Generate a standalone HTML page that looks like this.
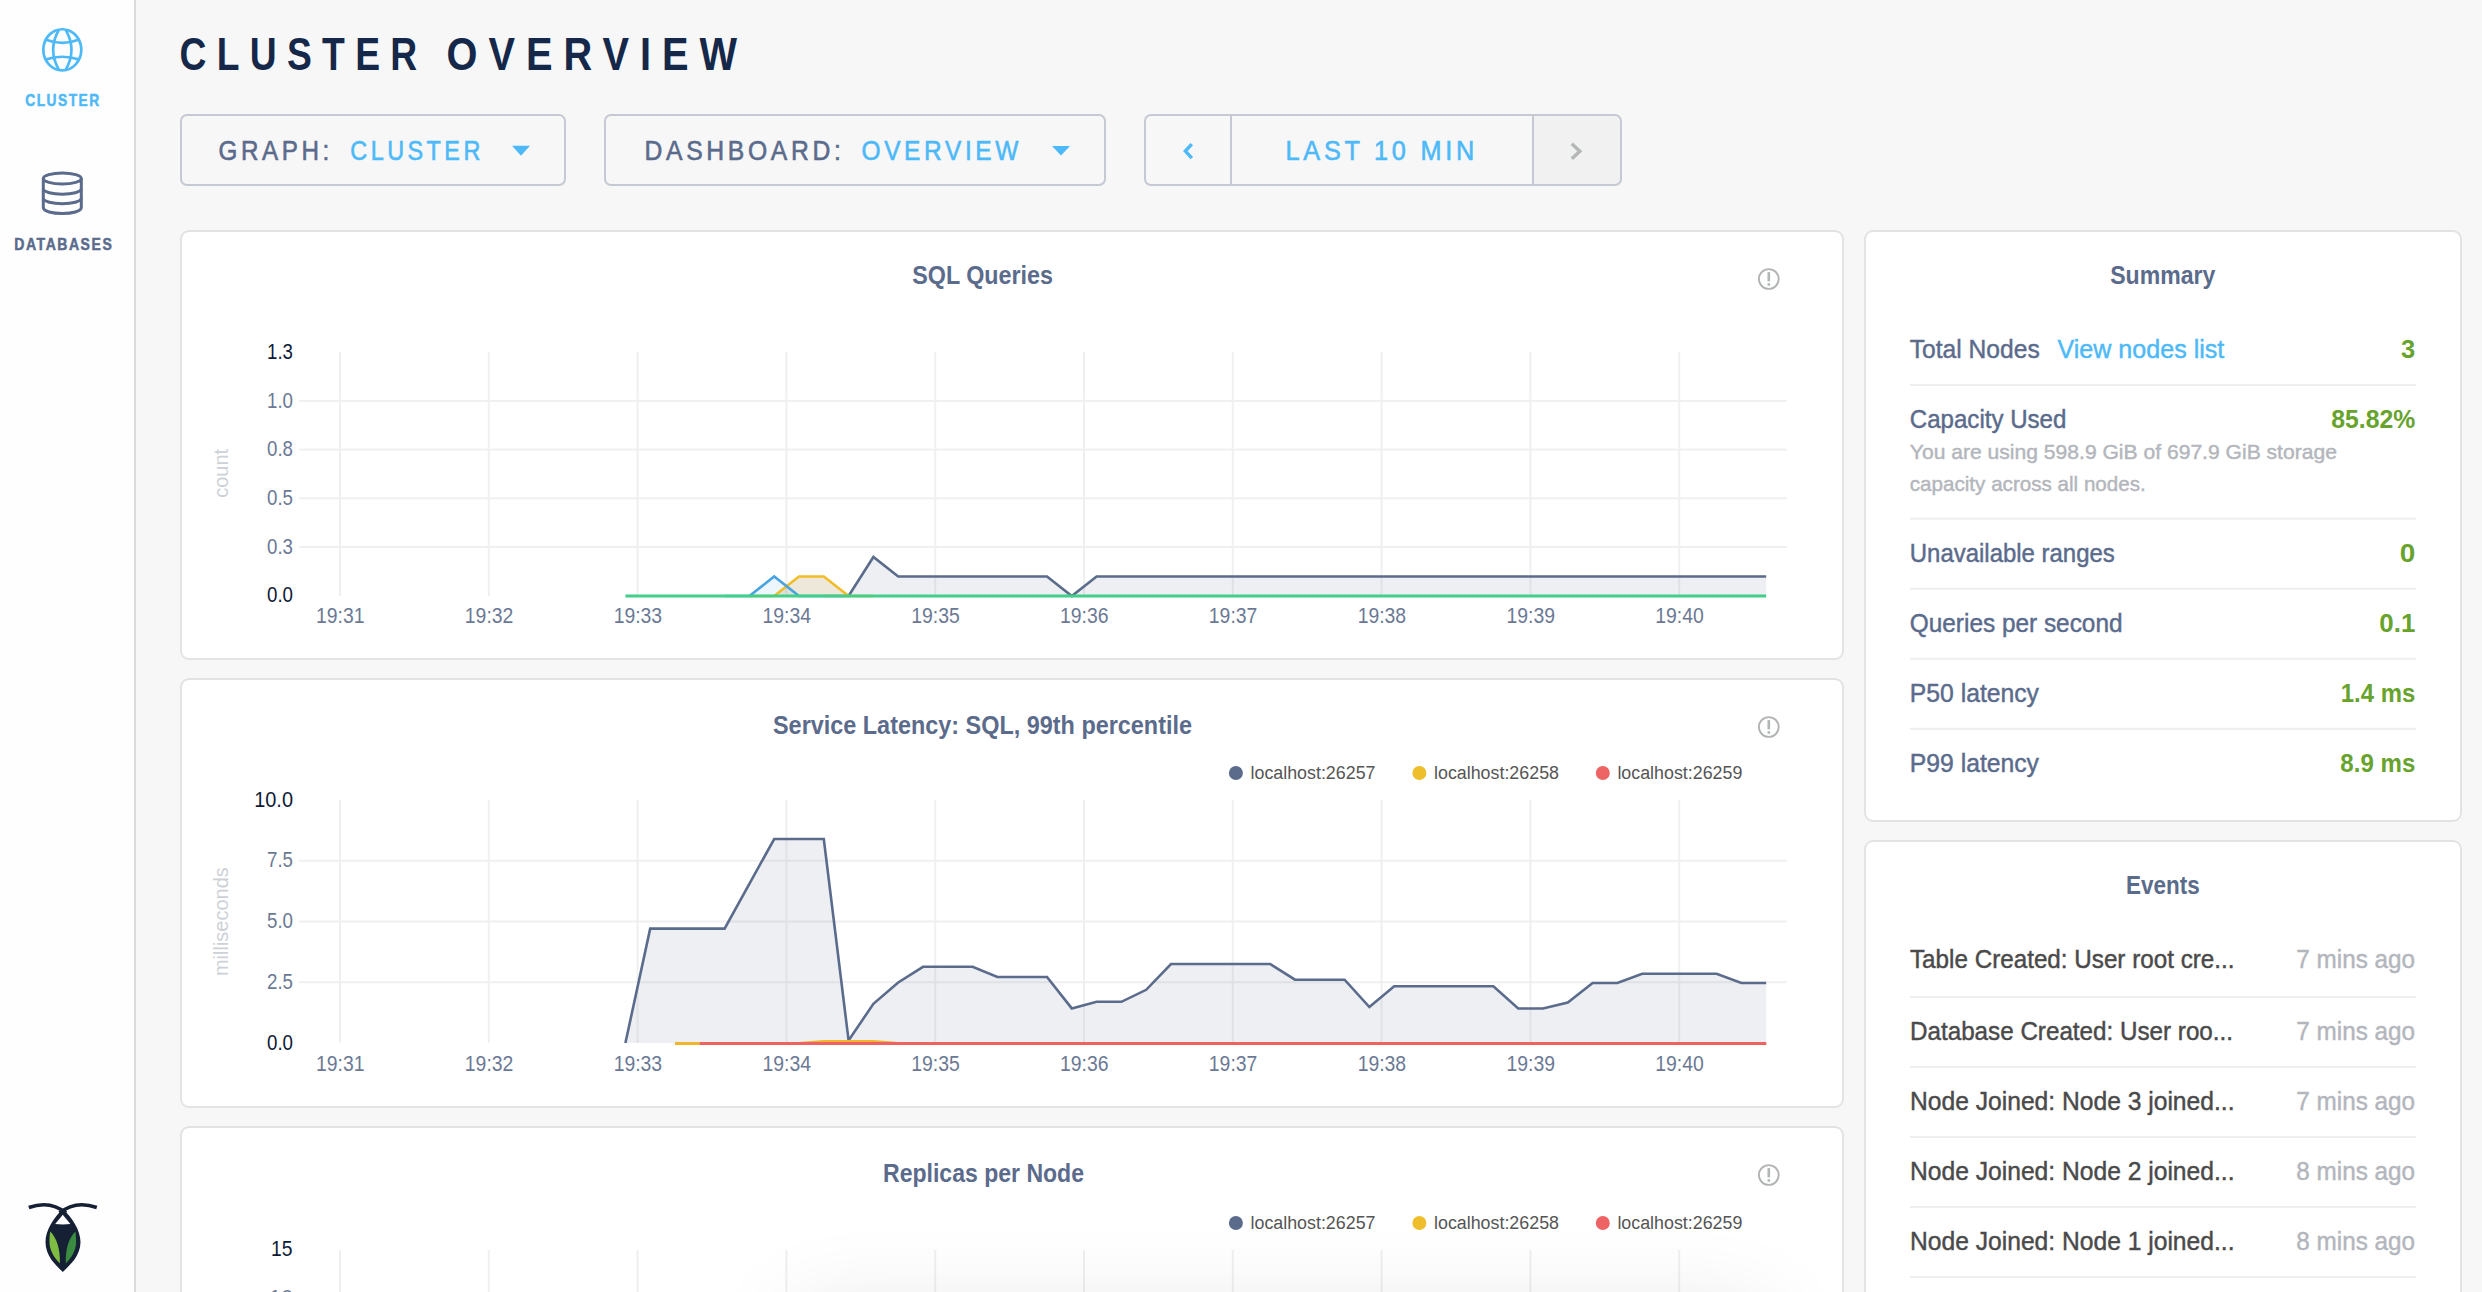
<!DOCTYPE html>
<html><head><meta charset="utf-8"><title>Cluster Overview</title>
<style>
html,body{margin:0;padding:0;background:#f7f7f7;overflow:hidden;}
body{width:2482px;height:1292px;font-family:"Liberation Sans", sans-serif;}
.root{position:relative;width:2482px;height:1292px;overflow:hidden;}
svg{position:absolute;left:0;top:0;display:block;}
svg text{font-family:"Liberation Sans", sans-serif;}
.shadow{position:absolute;left:800px;top:1320px;width:960px;height:200px;border-radius:8px;box-shadow:0 0 90px 10px rgba(0,0,0,0.10);background:transparent;}
</style></head><body>
<div class="root">
<svg width="2482" height="1292" viewBox="0 0 2482 1292">
<rect x="0" y="0" width="134" height="1292" fill="#fefefe"/>
<rect x="134" y="0" width="2" height="1292" fill="#dadada"/>
<g fill="none" stroke="#4eb9f8" stroke-width="2.7"><ellipse cx="62.3" cy="49.85" rx="19" ry="20.6"/><path d="M58.8 30 Q47.5 49.8 58.8 69.6"/><path d="M65.8 30 Q77.1 49.8 65.8 69.6"/><path d="M45.3 39.4 Q62.3 46.2 79.3 39.4"/><path d="M45.3 59.6 Q62.3 53.9 79.3 59.6"/></g>
<text x="63" y="106.3" font-size="16.5" fill="#4eb9f8" stroke="#4eb9f8" stroke-width="0.5" font-weight="bold" text-anchor="middle" textLength="75.5" lengthAdjust="spacingAndGlyphs" letter-spacing="1.8" >CLUSTER</text>
<g fill="none" stroke="#5b6b8c" stroke-width="3"><ellipse cx="62.3" cy="178.5" rx="19" ry="5.5"/><path d="M43.3 178.5 V207.5 C43.3 215.5 81.3 215.5 81.3 207.5 V178.5"/><path d="M43.3 188.5 C43.3 196 81.3 196 81.3 188.5"/><path d="M43.3 198 C43.3 205.5 81.3 205.5 81.3 198"/></g>
<text x="63.8" y="250.3" font-size="16.5" fill="#5b6b8c" stroke="#5b6b8c" stroke-width="0.5" font-weight="bold" text-anchor="middle" textLength="99" lengthAdjust="spacingAndGlyphs" letter-spacing="1.8" >DATABASES</text>
<g><path d="M28.8 1207.5 C42 1202.8 54 1203 66 1213" fill="none" stroke="#152035" stroke-width="3.6"/><path d="M96.8 1207.5 C83.6 1202.8 71.6 1203 59.6 1213" fill="none" stroke="#152035" stroke-width="3.6"/><path d="M62.8 1209 C72 1217.5 80.5 1230 80.5 1242 C80.5 1256 70 1265 62.8 1272 C55.5 1265 45.5 1256 45.5 1242 C45.5 1230 54 1217.5 62.8 1209 Z" fill="#152035"/><path d="M62.8 1214.8 L55.2 1224 C60 1224.6 66 1224.6 70.4 1224 Z" fill="#fefefe"/><path d="M50.2 1231.5 C56 1237 60.5 1248 59.8 1263.5 C53.5 1257 49.5 1250 49.5 1242 C49.5 1238 49.7 1234.5 50.2 1231.5 Z" fill="#7fbc42"/><path d="M75.4 1231.5 C69.6 1237 65.1 1248 65.8 1263.5 C72.1 1257 76.1 1250 76.1 1242 C76.1 1238 75.9 1234.5 75.4 1231.5 Z" fill="#3a8a3f"/></g>
<text x="179.5" y="70" font-size="47" fill="#152849" font-weight="bold" textLength="248" lengthAdjust="spacingAndGlyphs" letter-spacing="13" >CLUSTER</text>
<text x="446.5" y="70" font-size="47" fill="#152849" font-weight="bold" textLength="301.5" lengthAdjust="spacingAndGlyphs" letter-spacing="13" >OVERVIEW</text>
<rect x="181" y="115" width="384" height="70" rx="6" ry="6" fill="#f7f7f7" stroke="#c5c9d3" stroke-width="2"/>
<text x="218.5" y="160" font-size="27" fill="#5b6b8c" stroke="#5b6b8c" stroke-width="0.6" textLength="114.3" lengthAdjust="spacingAndGlyphs" letter-spacing="4" >GRAPH:</text>
<text x="350.3" y="160" font-size="27" fill="#4eb9f8" stroke="#4eb9f8" stroke-width="0.6" textLength="133.5" lengthAdjust="spacingAndGlyphs" letter-spacing="4" >CLUSTER</text>
<path d="M512 145.8 L530 145.8 L521 155.8 Z" fill="#4eb9f8"/>
<rect x="605" y="115" width="500" height="70" rx="6" ry="6" fill="#f7f7f7" stroke="#c5c9d3" stroke-width="2"/>
<text x="644.5" y="160" font-size="27" fill="#5b6b8c" stroke="#5b6b8c" stroke-width="0.6" textLength="200" lengthAdjust="spacingAndGlyphs" letter-spacing="4" >DASHBOARD:</text>
<text x="861.5" y="160" font-size="27" fill="#4eb9f8" stroke="#4eb9f8" stroke-width="0.6" textLength="160.5" lengthAdjust="spacingAndGlyphs" letter-spacing="4" >OVERVIEW</text>
<path d="M1052 146 L1070 146 L1061 155.6 Z" fill="#4eb9f8"/>
<path d="M1533 115 H1616 Q1621 115 1621 121 V179 Q1621 185 1616 185 H1533 Z" fill="#f1f1f2"/>
<rect x="1145" y="115" width="476" height="70" rx="6" ry="6" fill="none" stroke="#c5c9d3" stroke-width="2"/>
<rect x="1230" y="115" width="2" height="70" fill="#c5c9d3"/>
<rect x="1532" y="115" width="2" height="70" fill="#c5c9d3"/>
<path d="M1191.8 144.1 L1185.4 151.1 L1191.8 158.1" fill="none" stroke="#4eb9f8" stroke-width="3.5"/>
<path d="M1571.8 143.8 L1579.8 151.3 L1571.8 158.8" fill="none" stroke="#b3b7b7" stroke-width="3.5"/>
<text x="1285.5" y="160.4" font-size="27" fill="#4eb9f8" stroke="#4eb9f8" stroke-width="0.6" textLength="192.5" lengthAdjust="spacingAndGlyphs" letter-spacing="4" >LAST 10 MIN</text>
<rect x="181" y="231" width="1662" height="428" rx="8" ry="8" fill="#ffffff" stroke="#e3e3e3" stroke-width="2"/>
<rect x="181" y="679" width="1662" height="428" rx="8" ry="8" fill="#ffffff" stroke="#e3e3e3" stroke-width="2"/>
<rect x="181" y="1127" width="1662" height="272" rx="8" ry="8" fill="#ffffff" stroke="#e3e3e3" stroke-width="2"/>
<rect x="1865" y="231" width="596" height="590" rx="8" ry="8" fill="#ffffff" stroke="#e3e3e3" stroke-width="2"/>
<rect x="1865" y="841" width="596" height="558" rx="8" ry="8" fill="#ffffff" stroke="#e3e3e3" stroke-width="2"/>
<circle cx="1768.8" cy="279" r="9.9" fill="none" stroke="#b2b5b5" stroke-width="1.9"/>
<rect x="1767.5" y="272.1" width="2.6" height="9.3" fill="#b2b5b5"/>
<rect x="1767.5" y="283.2" width="2.6" height="2.5" fill="#b2b5b5"/>
<circle cx="1768.8" cy="727" r="9.9" fill="none" stroke="#b2b5b5" stroke-width="1.9"/>
<rect x="1767.5" y="720.1" width="2.6" height="9.3" fill="#b2b5b5"/>
<rect x="1767.5" y="731.2" width="2.6" height="2.5" fill="#b2b5b5"/>
<circle cx="1768.8" cy="1175" r="9.9" fill="none" stroke="#b2b5b5" stroke-width="1.9"/>
<rect x="1767.5" y="1168.1" width="2.6" height="9.3" fill="#b2b5b5"/>
<rect x="1767.5" y="1179.2" width="2.6" height="2.5" fill="#b2b5b5"/>
<text x="912.3" y="283.8" font-size="26" fill="#5b6b8c" font-weight="bold" textLength="140.7" lengthAdjust="spacingAndGlyphs" >SQL Queries</text>
<text x="773" y="733.8" font-size="26" fill="#5b6b8c" font-weight="bold" textLength="419" lengthAdjust="spacingAndGlyphs" >Service Latency: SQL, 99th percentile</text>
<text x="883" y="1181.8" font-size="26" fill="#5b6b8c" font-weight="bold" textLength="201" lengthAdjust="spacingAndGlyphs" >Replicas per Node</text>
<rect x="339.0" y="352" width="2" height="244" fill="#f0f0f0"/>
<rect x="487.8" y="352" width="2" height="244" fill="#f0f0f0"/>
<rect x="636.6" y="352" width="2" height="244" fill="#f0f0f0"/>
<rect x="785.4" y="352" width="2" height="244" fill="#f0f0f0"/>
<rect x="934.2" y="352" width="2" height="244" fill="#f0f0f0"/>
<rect x="1083.0" y="352" width="2" height="244" fill="#f0f0f0"/>
<rect x="1231.8" y="352" width="2" height="244" fill="#f0f0f0"/>
<rect x="1380.6" y="352" width="2" height="244" fill="#f0f0f0"/>
<rect x="1529.4" y="352" width="2" height="244" fill="#f0f0f0"/>
<rect x="1678.2" y="352" width="2" height="244" fill="#f0f0f0"/>
<rect x="299" y="399.9" width="1488" height="2" fill="#f0f0f0"/>
<rect x="299" y="448.6" width="1488" height="2" fill="#f0f0f0"/>
<rect x="299" y="497.3" width="1488" height="2" fill="#f0f0f0"/>
<rect x="299" y="546.0" width="1488" height="2" fill="#f0f0f0"/>
<text x="293" y="358.8" font-size="21.3" fill="#0d1a36" text-anchor="end" textLength="26.0" lengthAdjust="spacingAndGlyphs" >1.3</text>
<text x="293" y="407.5" font-size="21.3" fill="#6b7995" text-anchor="end" textLength="26.0" lengthAdjust="spacingAndGlyphs" >1.0</text>
<text x="293" y="456.20000000000005" font-size="21.3" fill="#6b7995" text-anchor="end" textLength="26.0" lengthAdjust="spacingAndGlyphs" >0.8</text>
<text x="293" y="504.90000000000003" font-size="21.3" fill="#6b7995" text-anchor="end" textLength="26.0" lengthAdjust="spacingAndGlyphs" >0.5</text>
<text x="293" y="553.6" font-size="21.3" fill="#6b7995" text-anchor="end" textLength="26.0" lengthAdjust="spacingAndGlyphs" >0.3</text>
<text x="293" y="602.3000000000001" font-size="21.3" fill="#0d1a36" text-anchor="end" textLength="26.0" lengthAdjust="spacingAndGlyphs" >0.0</text>
<text x="340.3" y="622.9" font-size="21.2" fill="#6b7995" text-anchor="middle" textLength="48.5" lengthAdjust="spacingAndGlyphs" >19:31</text>
<text x="489.1" y="622.9" font-size="21.2" fill="#6b7995" text-anchor="middle" textLength="48.5" lengthAdjust="spacingAndGlyphs" >19:32</text>
<text x="637.9" y="622.9" font-size="21.2" fill="#6b7995" text-anchor="middle" textLength="48.5" lengthAdjust="spacingAndGlyphs" >19:33</text>
<text x="786.6999999999999" y="622.9" font-size="21.2" fill="#6b7995" text-anchor="middle" textLength="48.5" lengthAdjust="spacingAndGlyphs" >19:34</text>
<text x="935.5" y="622.9" font-size="21.2" fill="#6b7995" text-anchor="middle" textLength="48.5" lengthAdjust="spacingAndGlyphs" >19:35</text>
<text x="1084.3" y="622.9" font-size="21.2" fill="#6b7995" text-anchor="middle" textLength="48.5" lengthAdjust="spacingAndGlyphs" >19:36</text>
<text x="1233.1" y="622.9" font-size="21.2" fill="#6b7995" text-anchor="middle" textLength="48.5" lengthAdjust="spacingAndGlyphs" >19:37</text>
<text x="1381.8999999999999" y="622.9" font-size="21.2" fill="#6b7995" text-anchor="middle" textLength="48.5" lengthAdjust="spacingAndGlyphs" >19:38</text>
<text x="1530.7" y="622.9" font-size="21.2" fill="#6b7995" text-anchor="middle" textLength="48.5" lengthAdjust="spacingAndGlyphs" >19:39</text>
<text x="1679.5" y="622.9" font-size="21.2" fill="#6b7995" text-anchor="middle" textLength="48.5" lengthAdjust="spacingAndGlyphs" >19:40</text>
<text x="227.6" y="473.3" font-size="20" fill="#cdd1d8" text-anchor="middle" transform="rotate(-90 227.6 473.3)">count</text>
<path d="M625.4 596.0 L650.2 596.0 L675.0 596.0 L699.8 596.0 L724.6 596.0 L749.4 596.0 L774.2 596.0 L799.0 596.0 L823.8 596.0 L848.6 596.0 L873.4 557.0 L898.2 576.5 L923.0 576.5 L947.8 576.5 L972.6 576.5 L997.4 576.5 L1022.2 576.5 L1047.0 576.5 L1071.8 596.0 L1096.6 576.5 L1121.4 576.5 L1146.2 576.5 L1171.0 576.5 L1195.8 576.5 L1220.6 576.5 L1245.4 576.5 L1270.2 576.5 L1295.0 576.5 L1319.8 576.5 L1344.6 576.5 L1369.4 576.5 L1394.2 576.5 L1419.0 576.5 L1443.8 576.5 L1468.6 576.5 L1493.4 576.5 L1518.2 576.5 L1543.0 576.5 L1567.8 576.5 L1592.6 576.5 L1617.4 576.5 L1642.2 576.5 L1667.0 576.5 L1691.8 576.5 L1716.6 576.5 L1741.4 576.5 L1766.2 576.5 L1766.2 596 L625.4 596 Z" fill="rgba(90,106,140,0.11)"/>
<path d="M625.4 596.0 L650.2 596.0 L675.0 596.0 L699.8 596.0 L724.6 596.0 L749.4 596.0 L774.2 596.0 L799.0 576.5 L823.8 576.5 L848.6 596.0 L873.4 596.0 L898.2 596.0 L923.0 596.0 L947.8 596.0 L972.6 596.0 L997.4 596.0 L1022.2 596.0 L1047.0 596.0 L1071.8 596.0 L1096.6 596.0 L1121.4 596.0 L1146.2 596.0 L1171.0 596.0 L1195.8 596.0 L1220.6 596.0 L1245.4 596.0 L1270.2 596.0 L1295.0 596.0 L1319.8 596.0 L1344.6 596.0 L1369.4 596.0 L1394.2 596.0 L1419.0 596.0 L1443.8 596.0 L1468.6 596.0 L1493.4 596.0 L1518.2 596.0 L1543.0 596.0 L1567.8 596.0 L1592.6 596.0 L1617.4 596.0 L1642.2 596.0 L1667.0 596.0 L1691.8 596.0 L1716.6 596.0 L1741.4 596.0 L1766.2 596.0 L1766.2 596 L625.4 596 Z" fill="rgba(90,106,140,0.1)"/>
<path d="M625.4 596.0 L650.2 596.0 L675.0 596.0 L699.8 596.0 L724.6 596.0 L749.4 596.0 L774.2 596.0 L799.0 576.5 L823.8 576.5 L848.6 596.0 L873.4 596.0 L898.2 596.0 L923.0 596.0 L947.8 596.0 L972.6 596.0 L997.4 596.0 L1022.2 596.0 L1047.0 596.0 L1071.8 596.0 L1096.6 596.0 L1121.4 596.0 L1146.2 596.0 L1171.0 596.0 L1195.8 596.0 L1220.6 596.0 L1245.4 596.0 L1270.2 596.0 L1295.0 596.0 L1319.8 596.0 L1344.6 596.0 L1369.4 596.0 L1394.2 596.0 L1419.0 596.0 L1443.8 596.0 L1468.6 596.0 L1493.4 596.0 L1518.2 596.0 L1543.0 596.0 L1567.8 596.0 L1592.6 596.0 L1617.4 596.0 L1642.2 596.0 L1667.0 596.0 L1691.8 596.0 L1716.6 596.0 L1741.4 596.0 L1766.2 596.0 L1766.2 596 L625.4 596 Z" fill="rgba(239,181,44,0.12)"/>
<path d="M625.4 596.0 L650.2 596.0 L675.0 596.0 L699.8 596.0 L724.6 596.0 L749.4 596.0 L774.2 576.5 L799.0 596.0 L823.8 596.0 L848.6 596.0 L873.4 596.0 L898.2 596.0 L923.0 596.0 L947.8 596.0 L972.6 596.0 L997.4 596.0 L1022.2 596.0 L1047.0 596.0 L1071.8 596.0 L1096.6 596.0 L1121.4 596.0 L1146.2 596.0 L1171.0 596.0 L1195.8 596.0 L1220.6 596.0 L1245.4 596.0 L1270.2 596.0 L1295.0 596.0 L1319.8 596.0 L1344.6 596.0 L1369.4 596.0 L1394.2 596.0 L1419.0 596.0 L1443.8 596.0 L1468.6 596.0 L1493.4 596.0 L1518.2 596.0 L1543.0 596.0 L1567.8 596.0 L1592.6 596.0 L1617.4 596.0 L1642.2 596.0 L1667.0 596.0 L1691.8 596.0 L1716.6 596.0 L1741.4 596.0 L1766.2 596.0 L1766.2 596 L625.4 596 Z" fill="rgba(74,163,223,0.1)"/>
<path d="M823.8 596.0 L848.6 596.0 L873.4 557.0 L898.2 576.5 L923.0 576.5 L947.8 576.5 L972.6 576.5 L997.4 576.5 L1022.2 576.5 L1047.0 576.5 L1071.8 596.0 L1096.6 576.5 L1121.4 576.5 L1146.2 576.5 L1171.0 576.5 L1195.8 576.5 L1220.6 576.5 L1245.4 576.5 L1270.2 576.5 L1295.0 576.5 L1319.8 576.5 L1344.6 576.5 L1369.4 576.5 L1394.2 576.5 L1419.0 576.5 L1443.8 576.5 L1468.6 576.5 L1493.4 576.5 L1518.2 576.5 L1543.0 576.5 L1567.8 576.5 L1592.6 576.5 L1617.4 576.5 L1642.2 576.5 L1667.0 576.5 L1691.8 576.5 L1716.6 576.5 L1741.4 576.5 L1766.2 576.5" fill="none" stroke="#5b6b8c" stroke-width="2.6" stroke-linejoin="miter"/>
<path d="M749.4 596.0 L774.2 596.0 L799.0 576.5 L823.8 576.5 L848.6 596.0 L873.4 596.0" fill="none" stroke="#f1bc25" stroke-width="2.6" stroke-linejoin="miter"/>
<path d="M724.6 596.0 L749.4 596.0 L774.2 576.5 L799.0 596.0 L823.8 596.0" fill="none" stroke="#4aa3df" stroke-width="2.6" stroke-linejoin="miter"/>
<path d="M625.4 596.0 L650.2 596.0 L675.0 596.0 L699.8 596.0 L724.6 596.0 L749.4 596.0 L774.2 596.0 L799.0 596.0 L823.8 596.0 L848.6 596.0 L873.4 596.0 L898.2 596.0 L923.0 596.0 L947.8 596.0 L972.6 596.0 L997.4 596.0 L1022.2 596.0 L1047.0 596.0 L1071.8 596.0 L1096.6 596.0 L1121.4 596.0 L1146.2 596.0 L1171.0 596.0 L1195.8 596.0 L1220.6 596.0 L1245.4 596.0 L1270.2 596.0 L1295.0 596.0 L1319.8 596.0 L1344.6 596.0 L1369.4 596.0 L1394.2 596.0 L1419.0 596.0 L1443.8 596.0 L1468.6 596.0 L1493.4 596.0 L1518.2 596.0 L1543.0 596.0 L1567.8 596.0 L1592.6 596.0 L1617.4 596.0 L1642.2 596.0 L1667.0 596.0 L1691.8 596.0 L1716.6 596.0 L1741.4 596.0 L1766.2 596.0" fill="none" stroke="#40d08a" stroke-width="3.2" stroke-linejoin="miter"/>
<rect x="339.0" y="800" width="2" height="243" fill="#f0f0f0"/>
<rect x="487.8" y="800" width="2" height="243" fill="#f0f0f0"/>
<rect x="636.6" y="800" width="2" height="243" fill="#f0f0f0"/>
<rect x="785.4" y="800" width="2" height="243" fill="#f0f0f0"/>
<rect x="934.2" y="800" width="2" height="243" fill="#f0f0f0"/>
<rect x="1083.0" y="800" width="2" height="243" fill="#f0f0f0"/>
<rect x="1231.8" y="800" width="2" height="243" fill="#f0f0f0"/>
<rect x="1380.6" y="800" width="2" height="243" fill="#f0f0f0"/>
<rect x="1529.4" y="800" width="2" height="243" fill="#f0f0f0"/>
<rect x="1678.2" y="800" width="2" height="243" fill="#f0f0f0"/>
<rect x="299" y="859.8" width="1488" height="2" fill="#f0f0f0"/>
<rect x="299" y="920.5" width="1488" height="2" fill="#f0f0f0"/>
<rect x="299" y="981.2" width="1488" height="2" fill="#f0f0f0"/>
<text x="293" y="806.6" font-size="21.3" fill="#0d1a36" text-anchor="end" textLength="38.8" lengthAdjust="spacingAndGlyphs" >10.0</text>
<text x="293" y="867.35" font-size="21.3" fill="#6b7995" text-anchor="end" textLength="26.0" lengthAdjust="spacingAndGlyphs" >7.5</text>
<text x="293" y="928.1" font-size="21.3" fill="#6b7995" text-anchor="end" textLength="26.0" lengthAdjust="spacingAndGlyphs" >5.0</text>
<text x="293" y="988.85" font-size="21.3" fill="#6b7995" text-anchor="end" textLength="26.0" lengthAdjust="spacingAndGlyphs" >2.5</text>
<text x="293" y="1049.6" font-size="21.3" fill="#0d1a36" text-anchor="end" textLength="26.0" lengthAdjust="spacingAndGlyphs" >0.0</text>
<text x="340.3" y="1070.9" font-size="21.2" fill="#6b7995" text-anchor="middle" textLength="48.5" lengthAdjust="spacingAndGlyphs" >19:31</text>
<text x="489.1" y="1070.9" font-size="21.2" fill="#6b7995" text-anchor="middle" textLength="48.5" lengthAdjust="spacingAndGlyphs" >19:32</text>
<text x="637.9" y="1070.9" font-size="21.2" fill="#6b7995" text-anchor="middle" textLength="48.5" lengthAdjust="spacingAndGlyphs" >19:33</text>
<text x="786.6999999999999" y="1070.9" font-size="21.2" fill="#6b7995" text-anchor="middle" textLength="48.5" lengthAdjust="spacingAndGlyphs" >19:34</text>
<text x="935.5" y="1070.9" font-size="21.2" fill="#6b7995" text-anchor="middle" textLength="48.5" lengthAdjust="spacingAndGlyphs" >19:35</text>
<text x="1084.3" y="1070.9" font-size="21.2" fill="#6b7995" text-anchor="middle" textLength="48.5" lengthAdjust="spacingAndGlyphs" >19:36</text>
<text x="1233.1" y="1070.9" font-size="21.2" fill="#6b7995" text-anchor="middle" textLength="48.5" lengthAdjust="spacingAndGlyphs" >19:37</text>
<text x="1381.8999999999999" y="1070.9" font-size="21.2" fill="#6b7995" text-anchor="middle" textLength="48.5" lengthAdjust="spacingAndGlyphs" >19:38</text>
<text x="1530.7" y="1070.9" font-size="21.2" fill="#6b7995" text-anchor="middle" textLength="48.5" lengthAdjust="spacingAndGlyphs" >19:39</text>
<text x="1679.5" y="1070.9" font-size="21.2" fill="#6b7995" text-anchor="middle" textLength="48.5" lengthAdjust="spacingAndGlyphs" >19:40</text>
<text x="227.6" y="921.6" font-size="20" fill="#cdd1d8" text-anchor="middle" transform="rotate(-90 227.6 921.6)">milliseconds</text>
<path d="M625.4 1043.0 L650.2 928.6 L675.0 928.6 L699.8 928.6 L724.6 928.6 L774.2 839.0 L799.0 839.0 L823.8 839.0 L848.6 1040.5 L873.4 1003.8 L898.2 982.5 L923.0 966.8 L947.8 966.8 L972.6 966.8 L997.4 977.0 L1022.2 977.0 L1047.0 977.0 L1071.8 1008.4 L1096.6 1001.8 L1121.4 1001.8 L1146.2 989.8 L1171.0 964.0 L1195.8 964.0 L1220.6 964.0 L1245.4 964.0 L1270.2 964.0 L1295.0 979.7 L1319.8 979.7 L1344.6 979.7 L1369.4 1007.0 L1394.2 986.3 L1419.0 986.3 L1443.8 986.3 L1468.6 986.3 L1493.4 986.3 L1518.2 1008.5 L1543.0 1008.5 L1567.8 1002.5 L1592.6 983.0 L1617.4 983.0 L1642.2 973.7 L1667.0 973.7 L1691.8 973.7 L1716.6 973.7 L1741.4 983.0 L1766.2 983.0 L1766.2 1043 L625.4 1043 Z" fill="rgba(90,106,140,0.11)"/>
<path d="M625.4 1043.0 L650.2 928.6 L675.0 928.6 L699.8 928.6 L724.6 928.6 L774.2 839.0 L799.0 839.0 L823.8 839.0 L848.6 1040.5 L873.4 1003.8 L898.2 982.5 L923.0 966.8 L947.8 966.8 L972.6 966.8 L997.4 977.0 L1022.2 977.0 L1047.0 977.0 L1071.8 1008.4 L1096.6 1001.8 L1121.4 1001.8 L1146.2 989.8 L1171.0 964.0 L1195.8 964.0 L1220.6 964.0 L1245.4 964.0 L1270.2 964.0 L1295.0 979.7 L1319.8 979.7 L1344.6 979.7 L1369.4 1007.0 L1394.2 986.3 L1419.0 986.3 L1443.8 986.3 L1468.6 986.3 L1493.4 986.3 L1518.2 1008.5 L1543.0 1008.5 L1567.8 1002.5 L1592.6 983.0 L1617.4 983.0 L1642.2 973.7 L1667.0 973.7 L1691.8 973.7 L1716.6 973.7 L1741.4 983.0 L1766.2 983.0" fill="none" stroke="#5b6b8c" stroke-width="2.6" stroke-linejoin="miter"/>
<path d="M675.0 1043.5 L799.0 1043.5 L823.8 1041.5 L873.4 1041.5 L898.2 1043.5 L1766.2 1043.5" fill="none" stroke="#efb52c" stroke-width="3" stroke-linejoin="miter"/>
<path d="M699.8 1043.5 L1766.2 1043.5" fill="none" stroke="#f06262" stroke-width="3" stroke-linejoin="miter"/>
<circle cx="1235.9" cy="773" r="7" fill="#5b6b8c"/>
<text x="1250.5" y="779.2" font-size="18" fill="#555555" textLength="125" lengthAdjust="spacingAndGlyphs" >localhost:26257</text>
<circle cx="1419.4" cy="773" r="7" fill="#efbe2c"/>
<text x="1434" y="779.2" font-size="18" fill="#555555" textLength="125" lengthAdjust="spacingAndGlyphs" >localhost:26258</text>
<circle cx="1602.8" cy="773" r="7" fill="#ee6464"/>
<text x="1617.4" y="779.2" font-size="18" fill="#555555" textLength="125" lengthAdjust="spacingAndGlyphs" >localhost:26259</text>
<circle cx="1235.9" cy="1223" r="7" fill="#5b6b8c"/>
<text x="1250.5" y="1229.2" font-size="18" fill="#555555" textLength="125" lengthAdjust="spacingAndGlyphs" >localhost:26257</text>
<circle cx="1419.4" cy="1223" r="7" fill="#efbe2c"/>
<text x="1434" y="1229.2" font-size="18" fill="#555555" textLength="125" lengthAdjust="spacingAndGlyphs" >localhost:26258</text>
<circle cx="1602.8" cy="1223" r="7" fill="#ee6464"/>
<text x="1617.4" y="1229.2" font-size="18" fill="#555555" textLength="125" lengthAdjust="spacingAndGlyphs" >localhost:26259</text>
<rect x="339.0" y="1250" width="2" height="42" fill="#f0f0f0"/>
<rect x="487.8" y="1250" width="2" height="42" fill="#f0f0f0"/>
<rect x="636.6" y="1250" width="2" height="42" fill="#f0f0f0"/>
<rect x="785.4" y="1250" width="2" height="42" fill="#f0f0f0"/>
<rect x="934.2" y="1250" width="2" height="42" fill="#f0f0f0"/>
<rect x="1083.0" y="1250" width="2" height="42" fill="#f0f0f0"/>
<rect x="1231.8" y="1250" width="2" height="42" fill="#f0f0f0"/>
<rect x="1380.6" y="1250" width="2" height="42" fill="#f0f0f0"/>
<rect x="1529.4" y="1250" width="2" height="42" fill="#f0f0f0"/>
<rect x="1678.2" y="1250" width="2" height="42" fill="#f0f0f0"/>
<text x="292.5" y="1256" font-size="21.3" fill="#0d1a36" text-anchor="end" textLength="21.5" lengthAdjust="spacingAndGlyphs" >15</text>
<text x="293" y="1304.5" font-size="21.3" fill="#6b7995" text-anchor="end" >10</text>
<text x="2110.2" y="283.7" font-size="26" fill="#5b6b8c" font-weight="bold" textLength="105.2" lengthAdjust="spacingAndGlyphs" >Summary</text>
<text x="1909.8" y="357.5" font-size="25.5" fill="#5b6b8c" stroke="#5b6b8c" stroke-width="0.45" textLength="129.9" lengthAdjust="spacingAndGlyphs" >Total Nodes</text>
<text x="2057.5" y="357.5" font-size="25.5" fill="#4eb9f8" stroke="#4eb9f8" stroke-width="0.45" textLength="166.8" lengthAdjust="spacingAndGlyphs" >View nodes list</text>
<text x="2415.3" y="357.5" font-size="25.5" fill="#67a32d" font-weight="bold" text-anchor="end" >3</text>
<rect x="1910" y="384" width="506" height="2" fill="#eeeeee"/>
<text x="1909.8" y="427.5" font-size="25.5" fill="#5b6b8c" stroke="#5b6b8c" stroke-width="0.45" textLength="156.6" lengthAdjust="spacingAndGlyphs" >Capacity Used</text>
<text x="2415.3" y="427.5" font-size="25.5" fill="#67a32d" font-weight="bold" text-anchor="end" textLength="84" lengthAdjust="spacingAndGlyphs" >85.82%</text>
<text x="1909.8" y="459.4" font-size="21" fill="#b3b6bc" stroke="#b3b6bc" stroke-width="0.45" textLength="427.1" lengthAdjust="spacingAndGlyphs" >You are using 598.9 GiB of 697.9 GiB storage</text>
<text x="1909.8" y="491.2" font-size="21" fill="#b3b6bc" stroke="#b3b6bc" stroke-width="0.45" textLength="236" lengthAdjust="spacingAndGlyphs" >capacity across all nodes.</text>
<rect x="1910" y="517.7" width="506" height="2" fill="#eeeeee"/>
<text x="1909.8" y="562" font-size="25.5" fill="#5b6b8c" stroke="#5b6b8c" stroke-width="0.45" textLength="205" lengthAdjust="spacingAndGlyphs" >Unavailable ranges</text>
<text x="2415.3" y="562" font-size="25.5" fill="#67a32d" font-weight="bold" text-anchor="end" textLength="15.5" lengthAdjust="spacingAndGlyphs" >0</text>
<rect x="1910" y="587.8" width="506" height="2" fill="#eeeeee"/>
<text x="1909.8" y="632" font-size="25.5" fill="#5b6b8c" stroke="#5b6b8c" stroke-width="0.45" textLength="212.7" lengthAdjust="spacingAndGlyphs" >Queries per second</text>
<text x="2415.3" y="632" font-size="25.5" fill="#67a32d" font-weight="bold" text-anchor="end" textLength="36" lengthAdjust="spacingAndGlyphs" >0.1</text>
<rect x="1910" y="657.8" width="506" height="2" fill="#eeeeee"/>
<text x="1909.8" y="702" font-size="25.5" fill="#5b6b8c" stroke="#5b6b8c" stroke-width="0.45" textLength="129.2" lengthAdjust="spacingAndGlyphs" >P50 latency</text>
<text x="2415.3" y="702" font-size="25.5" fill="#67a32d" font-weight="bold" text-anchor="end" textLength="74.5" lengthAdjust="spacingAndGlyphs" >1.4 ms</text>
<rect x="1910" y="727.8" width="506" height="2" fill="#eeeeee"/>
<text x="1909.8" y="772" font-size="25.5" fill="#5b6b8c" stroke="#5b6b8c" stroke-width="0.45" textLength="129.2" lengthAdjust="spacingAndGlyphs" >P99 latency</text>
<text x="2415.3" y="772" font-size="25.5" fill="#67a32d" font-weight="bold" text-anchor="end" textLength="75" lengthAdjust="spacingAndGlyphs" >8.9 ms</text>
<text x="2126" y="894.4" font-size="26" fill="#5b6b8c" font-weight="bold" textLength="73.8" lengthAdjust="spacingAndGlyphs" >Events</text>
<text x="1910" y="968.2" font-size="26" fill="#4a4a4a" stroke="#4a4a4a" stroke-width="0.45" textLength="324.5" lengthAdjust="spacingAndGlyphs" >Table Created: User root cre...</text>
<text x="2415" y="968.2" font-size="26" fill="#b3b6bc" stroke="#b3b6bc" stroke-width="0.45" text-anchor="end" textLength="118.7" lengthAdjust="spacingAndGlyphs" >7 mins ago</text>
<rect x="1910" y="996" width="506" height="2" fill="#eeeeee"/>
<text x="1910" y="1039.8" font-size="26" fill="#4a4a4a" stroke="#4a4a4a" stroke-width="0.45" textLength="323" lengthAdjust="spacingAndGlyphs" >Database Created: User roo...</text>
<text x="2415" y="1039.8" font-size="26" fill="#b3b6bc" stroke="#b3b6bc" stroke-width="0.45" text-anchor="end" textLength="118.7" lengthAdjust="spacingAndGlyphs" >7 mins ago</text>
<rect x="1910" y="1066" width="506" height="2" fill="#eeeeee"/>
<text x="1910" y="1109.8" font-size="26" fill="#4a4a4a" stroke="#4a4a4a" stroke-width="0.45" textLength="324.5" lengthAdjust="spacingAndGlyphs" >Node Joined: Node 3 joined...</text>
<text x="2415" y="1109.8" font-size="26" fill="#b3b6bc" stroke="#b3b6bc" stroke-width="0.45" text-anchor="end" textLength="118.7" lengthAdjust="spacingAndGlyphs" >7 mins ago</text>
<rect x="1910" y="1136" width="506" height="2" fill="#eeeeee"/>
<text x="1910" y="1179.8" font-size="26" fill="#4a4a4a" stroke="#4a4a4a" stroke-width="0.45" textLength="324.5" lengthAdjust="spacingAndGlyphs" >Node Joined: Node 2 joined...</text>
<text x="2415" y="1179.8" font-size="26" fill="#b3b6bc" stroke="#b3b6bc" stroke-width="0.45" text-anchor="end" textLength="118.7" lengthAdjust="spacingAndGlyphs" >8 mins ago</text>
<rect x="1910" y="1206" width="506" height="2" fill="#eeeeee"/>
<text x="1910" y="1249.8" font-size="26" fill="#4a4a4a" stroke="#4a4a4a" stroke-width="0.45" textLength="324.5" lengthAdjust="spacingAndGlyphs" >Node Joined: Node 1 joined...</text>
<text x="2415" y="1249.8" font-size="26" fill="#b3b6bc" stroke="#b3b6bc" stroke-width="0.45" text-anchor="end" textLength="118.7" lengthAdjust="spacingAndGlyphs" >8 mins ago</text>
<rect x="1910" y="1276" width="506" height="2" fill="#eeeeee"/>
</svg>
<div class="shadow"></div>
</div>
</body></html>
